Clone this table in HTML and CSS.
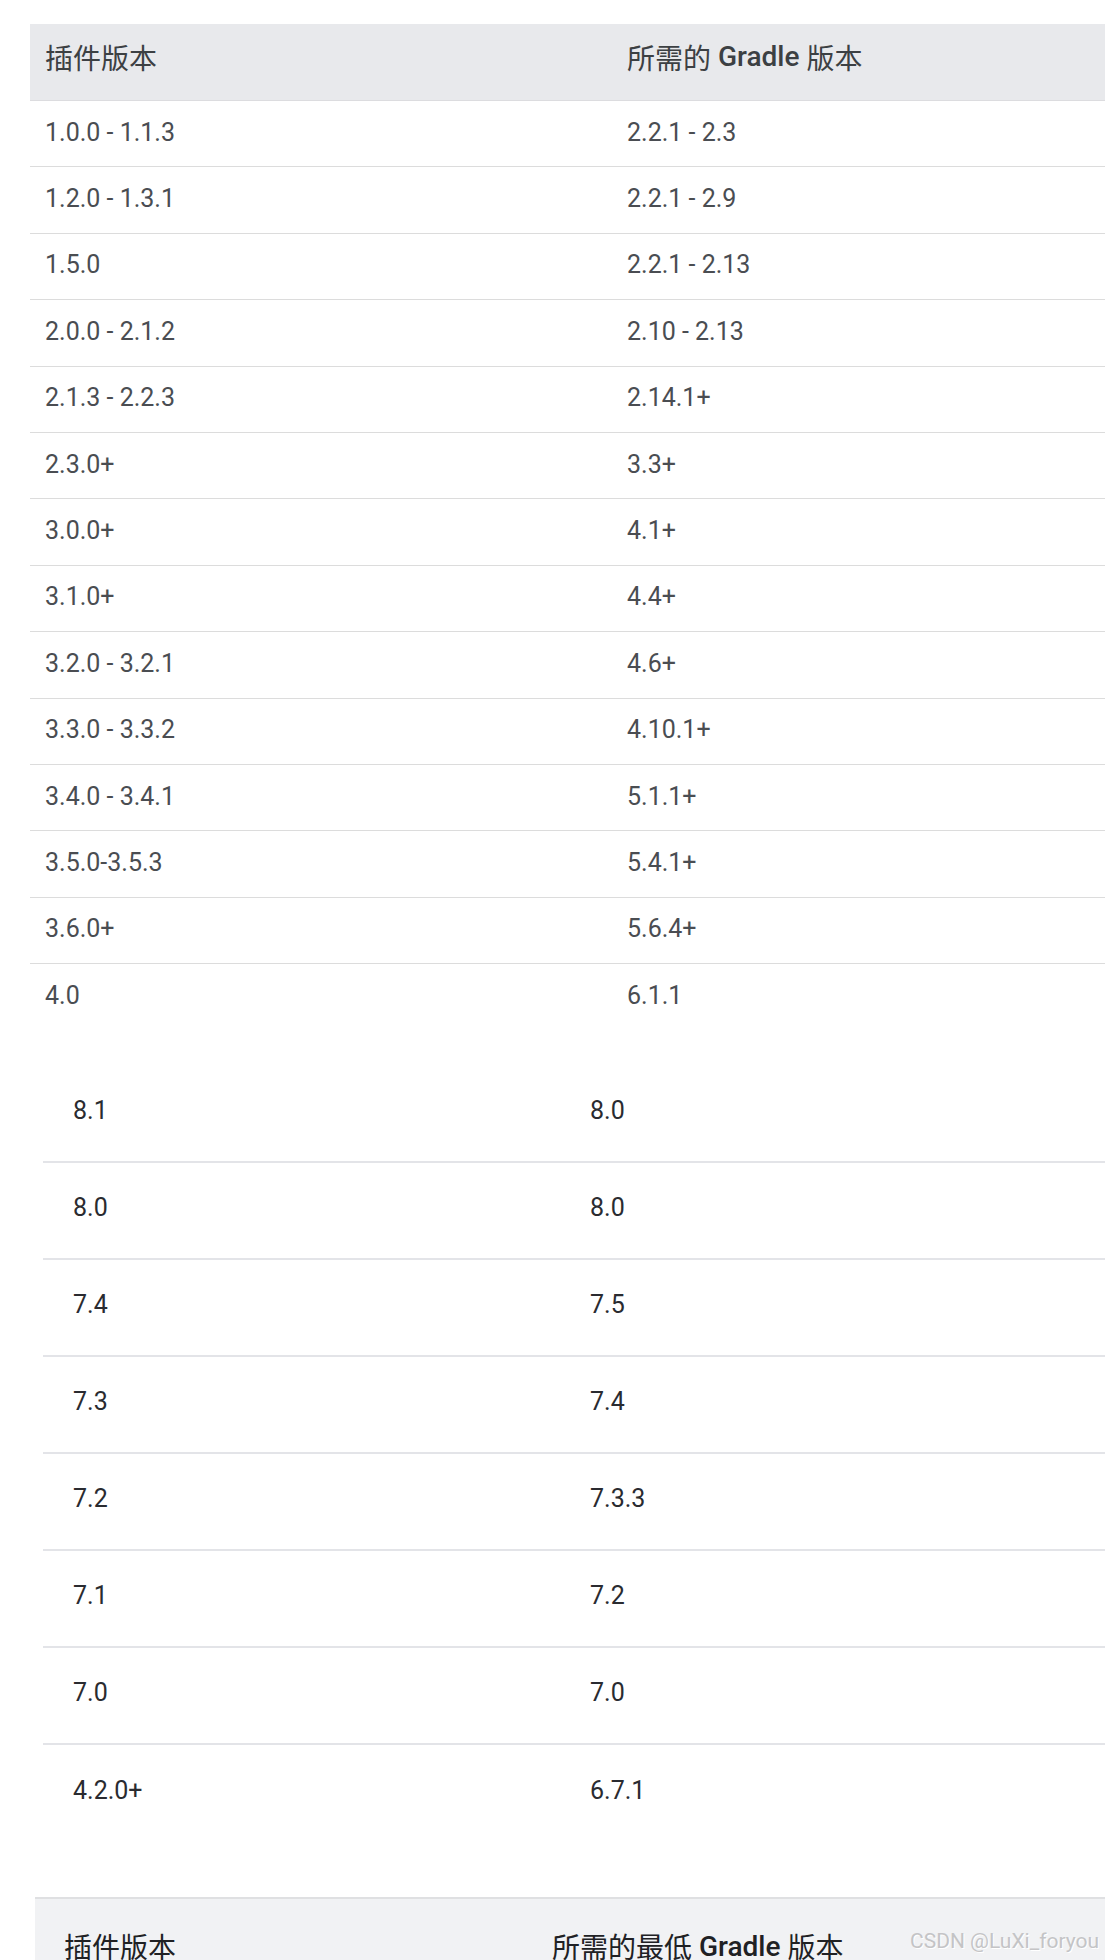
FILE: index.html
```html
<!DOCTYPE html>
<html lang="zh-CN">
<head>
<meta charset="utf-8">
<title>Android Gradle 插件版本</title>
<link rel="stylesheet" href="styles.css">
</head>
<body>
<div class="page">
  <div class="tbl tbl-a">
    <div class="row head"><div class="cell">插件版本</div><div class="cell">所需的&nbsp;<span class="lat">Gradle</span>&nbsp;版本</div></div>
    <div class="row"><div class="cell">1.0.0 - 1.1.3</div><div class="cell">2.2.1 - 2.3</div></div>
    <div class="row"><div class="cell">1.2.0 - 1.3.1</div><div class="cell">2.2.1 - 2.9</div></div>
    <div class="row"><div class="cell">1.5.0</div><div class="cell">2.2.1 - 2.13</div></div>
    <div class="row"><div class="cell">2.0.0 - 2.1.2</div><div class="cell">2.10 - 2.13</div></div>
    <div class="row"><div class="cell">2.1.3 - 2.2.3</div><div class="cell">2.14.1+</div></div>
    <div class="row"><div class="cell">2.3.0+</div><div class="cell">3.3+</div></div>
    <div class="row"><div class="cell">3.0.0+</div><div class="cell">4.1+</div></div>
    <div class="row"><div class="cell">3.1.0+</div><div class="cell">4.4+</div></div>
    <div class="row"><div class="cell">3.2.0 - 3.2.1</div><div class="cell">4.6+</div></div>
    <div class="row"><div class="cell">3.3.0 - 3.3.2</div><div class="cell">4.10.1+</div></div>
    <div class="row"><div class="cell">3.4.0 - 3.4.1</div><div class="cell">5.1.1+</div></div>
    <div class="row"><div class="cell">3.5.0-3.5.3</div><div class="cell">5.4.1+</div></div>
    <div class="row"><div class="cell">3.6.0+</div><div class="cell">5.6.4+</div></div>
    <div class="row last"><div class="cell">4.0</div><div class="cell">6.1.1</div></div>
  </div>

  <div class="tbl tbl-b">
    <div class="row"><div class="cell">8.1</div><div class="cell">8.0</div></div>
    <div class="row"><div class="cell">8.0</div><div class="cell">8.0</div></div>
    <div class="row"><div class="cell">7.4</div><div class="cell">7.5</div></div>
    <div class="row"><div class="cell">7.3</div><div class="cell">7.4</div></div>
    <div class="row"><div class="cell">7.2</div><div class="cell">7.3.3</div></div>
    <div class="row"><div class="cell">7.1</div><div class="cell">7.2</div></div>
    <div class="row"><div class="cell">7.0</div><div class="cell">7.0</div></div>
    <div class="row last"><div class="cell">4.2.0+</div><div class="cell">6.7.1</div></div>
  </div>

  <div class="tbl tbl-c">
    <div class="row head"><div class="cell">插件版本</div><div class="cell">所需的最低&nbsp;<span class="lat">Gradle</span>&nbsp;版本</div></div>
    <div class="watermark">CSDN @LuXi_foryou</div>
  </div>
</div>
</body>
</html>
```

FILE: styles.css
```css
html, body {
  margin: 0;
  padding: 0;
  background: #ffffff;
}

body {
  width: 1105px;
  height: 1960px;
  overflow: hidden;
  font-family: Roboto, "Noto Sans CJK SC", sans-serif;
}

.page {
  display: flex;
  flex-direction: column;
  padding-top: 24px;
}

.tbl {
  display: flex;
  flex-direction: column;
}

.row {
  display: grid;
  box-sizing: border-box;
}

.cell {
  display: flex;
  align-items: center;
  white-space: nowrap;
}

.lat {
  font-weight: 500;
}

/* ---------- table A ---------- */
.tbl-a {
  margin-left: 30px;
}

.tbl-a .row {
  grid-template-columns: 582px 1fr;
  height: 66.4px;
  border-bottom: 1px solid #dcdcdc;
  font-size: 25px;
  color: #4a4d52;
}

.tbl-a .row .cell {
  padding-left: 15px;
  padding-bottom: 3px;
}

.tbl-a .row.head {
  height: 77px;
  background: #e8e9ec;
  border-bottom: 1px solid #dcdcdf;
  font-size: 28px;
  font-weight: 400;
  color: #3c4043;
}

.tbl-a .row.head .cell {
  padding-bottom: 11px;
}

.tbl-a .row.last {
  border-bottom: none;
}

/* ---------- table B ---------- */
.tbl-b {
  margin-left: 43px;
  margin-top: 36px;
}

.tbl-b .row {
  grid-template-columns: 517px 1fr;
  height: 97px;
  border-bottom: 2px solid #e3e4e8;
  font-size: 25px;
  color: #2a2b30;
}

.tbl-b .row .cell {
  padding-left: 30px;
  padding-bottom: 6px;
}

.tbl-b .row.last {
  border-bottom: none;
}

/* ---------- table C ---------- */
.tbl-c {
  position: relative;
  margin-left: 35px;
  margin-top: 55px;
}

.tbl-c .row.head {
  grid-template-columns: 488px 1fr;
  height: 102px;
  border-top: 2px solid #dfe0e2;
  background: #f1f2f4;
  font-size: 28px;
  font-weight: 400;
  color: #202124;
}

.tbl-c .row.head .cell {
  padding-left: 29px;
  padding-bottom: 6px;
}

.watermark {
  position: absolute;
  top: 32px;
  left: 875px;
  font-family: Roboto, sans-serif;
  font-size: 21px;
  color: #c4c4c6;
  text-shadow: 1px 1px 0 #ffffff;
  white-space: nowrap;
}
```
